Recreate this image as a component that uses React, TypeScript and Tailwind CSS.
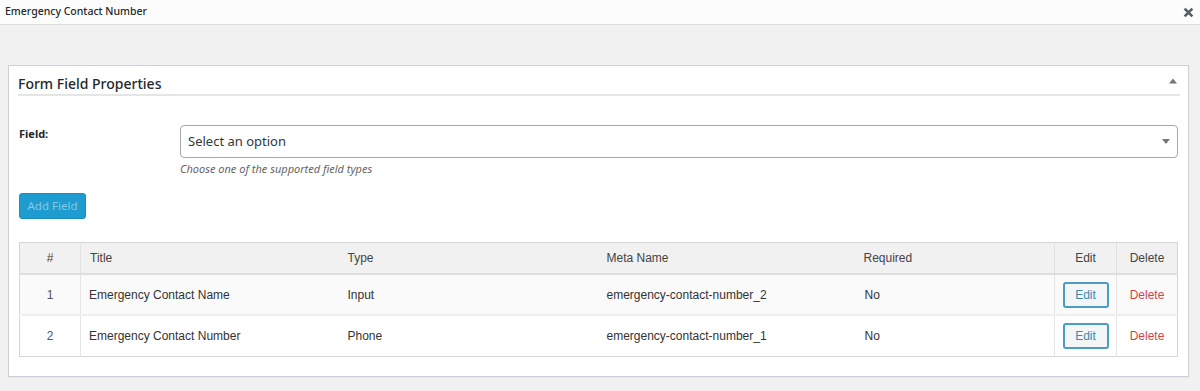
const rows = [
  { n: 1, title: 'Emergency Contact Name', type: 'Input', meta: 'emergency-contact-number_2', required: 'No' },
  { n: 2, title: 'Emergency Contact Number', type: 'Phone', meta: 'emergency-contact-number_1', required: 'No' },
]

export default function App() {
  return (
    <div className="w-[1200px] h-[391px] bg-[#f1f1f1] font-['Noto_Sans',sans-serif] text-[#23282d] overflow-hidden">
      {/* Modal title bar */}
      <div className="h-[25px] bg-[#fcfcfc] border-b border-[#dddddd] flex items-center justify-between pl-[5px] pr-[6px]">
        <span className="text-[10.5px] font-medium text-[#23282d]">Emergency Contact Number</span>
        <svg width="11" height="11" viewBox="0 0 10 10" className="text-[#555d66]">
          <path d="M1.5 1.5 L8.5 8.5 M8.5 1.5 L1.5 8.5" stroke="currentColor" strokeWidth="2.4" />
        </svg>
      </div>

      <div className="pt-[40px] px-[8px]">
        <div className="w-[1181px] h-[312px] bg-white border border-[#ccd0d4] shadow-[0_1px_1px_rgba(0,0,0,0.04)] pl-[9px] pr-[8px]">
          {/* Panel heading */}
          <div className="h-[30px] flex items-end justify-between border-b-2 border-[#e5e5e5]">
            <h2 className="text-[14px] leading-[20px] font-medium text-[#23282d]">Form Field Properties</h2>
            <svg width="8" height="6" viewBox="0 0 8 6" className="mb-[10px] mr-[3px]">
              <path d="M0 5.5 L4 0.5 L8 5.5 Z" fill="#72777c" />
            </svg>
          </div>

          <div className="pl-[1px] pr-[2px]">
            {/* Field row */}
            <div className="flex mt-[29px]">
              <div className="w-[161px] text-[11px] font-bold text-[#23282d] pt-[1px]">Field:</div>
              <div className="flex-1">
                <div className="h-[33px] border border-[#a8a8a8] rounded-[4px] bg-white flex items-center justify-between pl-[7px] pr-[7px]">
                  <span className="text-[13px] text-[#32373c]">Select an option</span>
                  <svg width="8" height="5" viewBox="0 0 8 5">
                    <path d="M0 0 L8 0 L4 5 Z" fill="#777" />
                  </svg>
                </div>
                <p className="mt-[3px] text-[11px] italic text-[#666666]">Choose one of the supported field types</p>
              </div>
            </div>

            {/* Add field */}
            <button
              disabled
              className="mt-[15px] h-[26px] w-[67px] rounded-[3px] bg-[#1e9cd0] border border-[#1a8fc0] text-[11.5px] text-[#80c8e8] flex items-center justify-center"
            >
              Add Field
            </button>

            {/* Table */}
            <table className="mt-[23px] w-[1158px] table-fixed border-collapse border border-[#d5d5d5] font-['Liberation_Sans',Arial,sans-serif] text-[12px] text-[#333]">
              <colgroup>
                <col className="w-[61px]" />
                <col className="w-[258px]" />
                <col className="w-[259px]" />
                <col className="w-[257px]" />
                <col className="w-[200px]" />
                <col className="w-[62px]" />
                <col className="w-[61px]" />
              </colgroup>
              <thead>
                <tr className="h-[32px] bg-[#f1f1f1] border-b-2 border-[#dedede] text-[#444]">
                  <th className="font-normal text-center border-r border-[#e1e1e1]">#</th>
                  <th className="font-normal text-left pl-[9px]">Title</th>
                  <th className="font-normal text-left pl-[9px]">Type</th>
                  <th className="font-normal text-left pl-[9px]">Meta Name</th>
                  <th className="font-normal text-left pl-[9px]">Required</th>
                  <th className="font-normal text-center border-l border-r border-[#e1e1e1]">Edit</th>
                  <th className="font-normal text-center">Delete</th>
                </tr>
              </thead>
              <tbody>
                {rows.map((r, i) => (
                  <tr key={r.n} className={i === 0 ? 'h-[41px] bg-[#fafafa] border-b-2 border-[#efefef]' : 'h-[41px] bg-white'}>
                    <td className="text-center text-[#555] border-r border-[#e5e5e5]">{r.n}</td>
                    <td className="pl-[8px]">{r.title}</td>
                    <td className="pl-[9px]">{r.type}</td>
                    <td className="pl-[9px]">{r.meta}</td>
                    <td className="pl-[10px]">{r.required}</td>
                    <td className="border-l border-r border-[#e5e5e5]">
                      <div className="flex justify-center">
                        <button className="w-[46px] h-[26px] rounded-[3px] border-2 border-[#4b9cc3] bg-[#f3f5f6] text-[#3a8ab0] text-[12px]">
                          Edit
                        </button>
                      </div>
                    </td>
                    <td className="text-center text-[#d0454c]">Delete</td>
                  </tr>
                ))}
              </tbody>
            </table>
          </div>
        </div>
      </div>
    </div>
  )
}
